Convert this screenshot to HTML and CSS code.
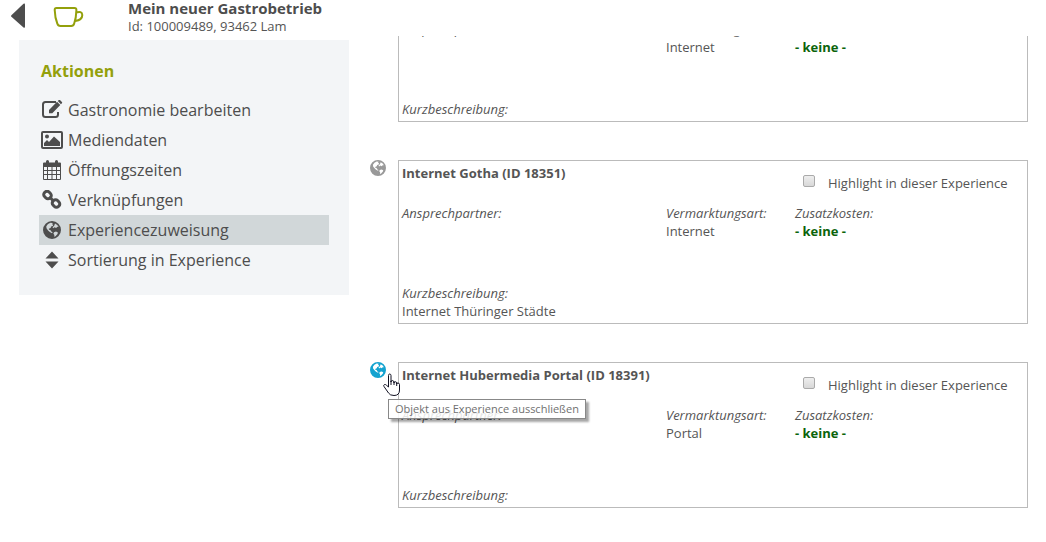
FILE: index.html
```
<!DOCTYPE html>
<html lang="de">
<head>
    <meta charset="UTF-8">
    <meta name="viewport" content="width=device-width, initial-scale=1.0">
    <title>Mein neuer Gastrobetrieb</title>
    <link rel="stylesheet" href="styles.css">
</head>
<body>

    <svg class="sprite" aria-hidden="true">
        <symbol id="globe" viewBox="0 0 18 18">
            <path fill-rule="evenodd" d="M9 0a9 9 0 1 0 0 18A9 9 0 0 0 9 0zM7.500 1.800l2.300.2-.8 1.200 1.200.6-.4 1.300-1.700.5-.5 1.400-1.800.8.2 1 1.500.2.4 1.300 1.700.9-.6 1-2.200-1.100-1.700-1.700-1.600-2.200-.2-1.900L5 3zM12 2.500l2.300 1.500 1.300 2-1.400-.2-1 1.200-1.700-.7-1.300 1-.6-1.100 1.600-1.500zM11 11.200l2-.6 1.900 1-.4 1.400-2 2.200-1.300.6.200-1.900-1-1.200z"/>
        </symbol>
    </svg>

    <header class="header">
        <button class="back" type="button" aria-label="Zurück">
            <svg width="14" height="26" viewBox="0 0 14 26"><path d="M14 1.500v22q0 2-1.500 1L.4 13.800q-.7-.8 0-1.600L12.500.8Q14-.3 14 1.500z"/></svg>
        </button>
        <svg class="cup" width="32" height="22" viewBox="0 0 32 22"><path d="M3.500 2h18q2 0 1.900 2-.2 8-2.200 13.500-.7 2.500-3 2.500H7.500q-2.500 0-3.200-2.500Q2 12 1.700 4q-.1-2 1.800-2zM23 6.500q6-2 6.300 2.500 0 5-7 6"/></svg>
        <div class="headline">
            <h1>Mein neuer Gastrobetrieb</h1>
            <p>Id: 100009489, 93462 Lam</p>
        </div>
    </header>

    <div class="page">
        <nav class="sidebar">
            <h2>Aktionen</h2>
            <a href="#">
                <svg width="22" height="20" viewBox="0 0 22 20"><path class="line" d="M15 2H4.500Q2 2 2 4.500v10Q2 17 4.500 17h10q2.500 0 2.500-2.500V12"/><path d="M8 10l8-8.200 3.300 3.300-8 8.200H8zM16.800 1l1-1q.7-.5 1.400.2l1.700 1.700q.6.700 0 1.300l-1 1z"/></svg>
                Gastronomie bearbeiten
            </a>
            <a href="#">
                <svg width="22" height="18" viewBox="0 0 22 18"><rect class="line" x="1" y="1" width="20" height="16" rx="1"/><circle cx="6" cy="5.500" r="2"/><path d="M3 15v-3l3-3 2 2 5-5.500 6 5.500v4z"/></svg>
                Mediendaten
            </a>
            <a href="#">
                <svg width="20" height="20" viewBox="0 0 20 20"><path fill-rule="evenodd" d="M2 2.500h2V1.500Q4 0 5.500 0T7 1.500v1h6v-1Q13 0 14.500 0T16 1.500v1h2q1 0 1 1V19q0 1-1 1H2q-1 0-1-1V3.500q0-1 1-1zM2 7v3h3V7zm4 0v3h3.500V7zm4.500 0v3H14V7zM15 7v3h3V7zM2 11v3h3v-3zm4 0v3h3.500v-3zm4.500 0v3H14v-3zm4.500 0v3h3v-3zM2 15v4h3v-4zm4 0v4h3.500v-4zm4.500 0v4H14v-4zm4.500 0v4h3v-4z"/></svg>
                Öffnungszeiten
            </a>
            <a href="#">
                <svg width="20" height="20" viewBox="0 0 20 20"><g class="chain"><rect x="-3.800" y="-3.200" width="7.600" height="6.400" rx="2.800" transform="translate(5.500 5) rotate(45)"/><rect x="-3.800" y="-3.200" width="7.600" height="6.400" rx="2.800" transform="translate(14 13.500) rotate(45)"/><path d="M7.500 7l4.500 4.500"/></g></svg>
                Verknüpfungen
            </a>
            <a href="#" class="active">
                <svg width="18" height="18"><use href="#globe"/></svg>
                Experiencezuweisung
            </a>
            <a href="#">
                <svg width="14" height="18" viewBox="0 0 14 18"><path d="M7 .5l6.500 7h-13zM7 17.500l6.500-7h-13z"/></svg>
                Sortierung in Experience
            </a>
        </nav>

        <main class="list">
            <section class="entry">
                <button class="assign" type="button" aria-label="Zuweisen"><svg width="16" height="16"><use href="#globe"/></svg></button>
                <div class="card">
                    <div class="top">
                        <h3>Internet</h3>
                        <label><input type="checkbox">Highlight in dieser Experience</label>
                    </div>
                    <dl class="info">
                        <div><dt>Ansprechpartner:</dt></div>
                        <div><dt>Vermarktungsart:</dt><dd>Internet</dd></div>
                        <div><dt>Zusatzkosten:</dt><dd class="free">- keine -</dd></div>
                    </dl>
                    <dl><dt>Kurzbeschreibung:</dt></dl>
                </div>
            </section>

            <section class="entry">
                <button class="assign" type="button" aria-label="Zuweisen"><svg width="16" height="16"><use href="#globe"/></svg></button>
                <div class="card">
                    <div class="top">
                        <h3>Internet Gotha (ID 18351)</h3>
                        <label><input type="checkbox">Highlight in dieser Experience</label>
                    </div>
                    <dl class="info">
                        <div><dt>Ansprechpartner:</dt></div>
                        <div><dt>Vermarktungsart:</dt><dd>Internet</dd></div>
                        <div><dt>Zusatzkosten:</dt><dd class="free">- keine -</dd></div>
                    </dl>
                    <dl><dt>Kurzbeschreibung:</dt><dd>Internet Thüringer Städte</dd></dl>
                </div>
            </section>

            <section class="entry">
                <button class="assign on" type="button" aria-describedby="tip"><svg width="16" height="16"><use href="#globe"/></svg></button>
                <div class="card">
                    <div class="top">
                        <h3>Internet Hubermedia Portal (ID 18391)</h3>
                        <label><input type="checkbox">Highlight in dieser Experience</label>
                    </div>
                    <dl class="info">
                        <div><dt>Ansprechpartner:</dt></div>
                        <div><dt>Vermarktungsart:</dt><dd>Portal</dd></div>
                        <div><dt>Zusatzkosten:</dt><dd class="free">- keine -</dd></div>
                    </dl>
                    <dl><dt>Kurzbeschreibung:</dt></dl>
                </div>
                <div class="tooltip" id="tip" role="tooltip">Objekt aus Experience ausschließen</div>
                <svg class="cursor" width="18" height="24" viewBox="0 0 18 24"><path d="M5.500 14V2.500q0-1.500 1.200-1.500T8 2.500V9q0-1.500 1.300-1.500T11 9v1q0-1.500 1.300-1.300T13.700 10v1q0-1.200 1.300-1 1.500.2 1.500 1.500V17q0 5.500-5.500 5.500-4 0-5.500-2.500L1 13.500q-.8-1.500.5-2 1-.3 2 .8z"/><path d="M8 8v4M11 9v3M13.700 10v3"/></svg>
            </section>
        </main>
    </div>

</body>
</html>
```

FILE: styles.css
```
* {
    box-sizing: border-box;
}
body {
    margin: 0;
    height: 100vh;
    overflow: hidden;
    background: #fff;
    color: #555;
    font-family: "Open Sans", "Noto Sans", sans-serif;
    font-size: 13px;
    line-height: 18px;
}
h1, h2, h3, p, dl, dd {
    margin: 0;
}
button {
    padding: 0;
    border: 0;
    background: none;
    cursor: pointer;
}
svg {
    display: block;
    fill: currentColor;
}
.sprite {
    display: none;
}

/* Kopfzeile */
.header {
    display: flex;
    align-items: flex-start;
    height: 36px;
    padding-left: 11px;
}
.back {
    width: 42px;
    padding-top: 3px;
    color: #4d4d4d;
}
.cup {
    margin-top: 6px;
    margin-right: 43px;
    fill: none;
    stroke: #93a00b;
    stroke-width: 2;
}
.headline h1 {
    color: #4d4d4d;
    font-size: 15px;
    line-height: 16px;
}
.headline p {
    line-height: 20px;
}

.page {
    display: flex;
    align-items: flex-start;
    height: calc(100vh - 36px);
}

/* Navigation links */
.sidebar {
    flex: 0 0 330px;
    margin: 4px 0 0 19px;
    padding: 20px;
    background: #f3f5f7;
}
.sidebar h2 {
    margin: 0 2px 13px;
    color: #93a00b;
    font-size: 16px;
    line-height: 22px;
}
.sidebar a {
    display: flex;
    align-items: center;
    height: 30px;
    color: #4d4d4d;
    font-size: 16px;
    text-decoration: none;
}
.sidebar a svg {
    width: 26px;
    margin-right: 3px;
}
.sidebar .active {
    background: #d1d7d9;
}
.line,
.chain {
    fill: none;
    stroke: currentColor;
    stroke-width: 2;
}
.chain {
    stroke-width: 3;
}

/* Liste der Experiences */
.list {
    flex: 1;
    height: 100%;
    padding: 0 18px 0 21px;
    overflow: hidden;
}
.entry {
    position: relative;
    display: flex;
    align-items: flex-start;
    margin-bottom: 38px;
}
.entry:first-child {
    margin-top: -60px;
}
.assign {
    width: 28px;
    color: #999;
}
.assign.on {
    color: #14a3d0;
}
.card {
    flex: 1;
    padding: 3px;
    border: 1px solid #bbb;
}
.top {
    display: flex;
    justify-content: space-between;
    height: 40px;
}
.top h3 {
    font-size: 13px;
}
.top label {
    display: flex;
    width: 221px;
    padding-top: 10px;
}
.top input {
    appearance: none;
    width: 12px;
    height: 12px;
    margin: 1px 13px 0 0;
    border: 1px solid #aaa;
    border-radius: 2px;
    background: linear-gradient(#eee, #d8d8d8);
}
.info {
    display: grid;
    grid-template-columns: 1fr 129px 229px;
    min-height: 80px;
}
dt {
    font-style: italic;
}
.free {
    color: #0b640b;
    font-weight: bold;
}

/* Hinweis am Mauszeiger */
.tooltip {
    position: absolute;
    top: 37px;
    left: 18px;
    padding: 0 6px;
    border: 1px solid #888;
    background: rgba(255, 255, 255, 0.85);
    box-shadow: 3px 3px 2px rgba(0, 0, 0, 0.35);
    color: #707070;
    font-size: 11px;
}
.cursor {
    position: absolute;
    top: 11px;
    left: 13px;
    fill: #fff;
    stroke: #112;
}
```
